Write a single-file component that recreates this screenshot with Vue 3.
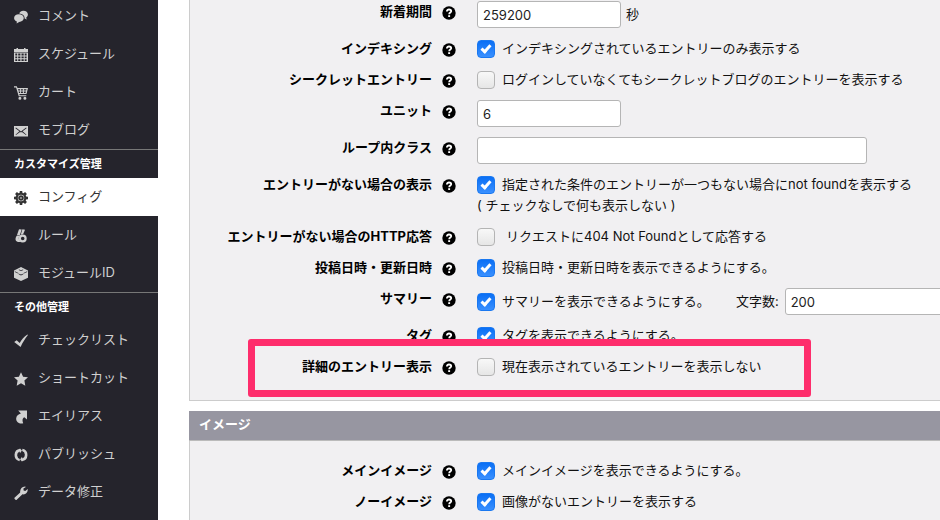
<template>
  <div class="admin">
    <nav class="sidebar">
      <template v-for="group in menu" :key="group.id">
        <h2 v-if="group.title" class="menu-title">{{ group.title }}</h2>
        <ul class="menu">
          <li v-for="item in group.items" :key="item.text">
            <a href="#" class="menu-link" :class="{ active: item.active }">
              <svg class="menu-icon" viewBox="0 0 14 14" aria-hidden="true">
                <path v-for="d in icons[item.icon]" :key="d" :d="d" fill="currentColor" fill-rule="evenodd" />
              </svg>
              <span>{{ item.text }}</span>
            </a>
          </li>
        </ul>
      </template>
    </nav>

    <main class="main">
      <section v-for="section in sections" :key="section.id" class="section" :class="{ titled: section.title }">
        <h2 v-if="section.title" class="section-title">{{ section.title }}</h2>
        <div class="rows">
          <div v-for="row in section.rows" :key="row.id" class="row">
            <label :for="row.id" class="row-label">{{ row.label }}</label>
            <button type="button" class="help" :aria-label="row.label">
              <svg viewBox="0 0 14 14">
                <circle cx="7" cy="7" r="6.7" fill="#000" />
                <path d="M4.9 5.5C4.9 4.1 5.8 3.5 7 3.5S9.2 4.2 9.2 5.3C9.2 6.6 7.2 6.6 7.2 8.2" fill="none" stroke="#fff" stroke-width="1.8" />
                <path d="M6.2 9.2h1.9v1.8H6.2z" fill="#fff" />
              </svg>
            </button>
            <div class="control">
              <div v-if="row.type === 'text'" class="line">
                <input :id="row.id" v-model="row.value" type="text" class="text-input" :class="row.size">
                <span v-if="row.unit">{{ row.unit }}</span>
              </div>
              <div v-else class="line">
                <input :id="row.id" v-model="row.value" type="checkbox" class="check">
                <label :for="row.id" class="check-label" :class="{ spaced: row.spaced }">{{ row.text }}</label>
                <template v-if="row.extra">
                  <label :for="row.id + '-extra'" class="extra-label">{{ row.extra.label }}</label>
                  <input :id="row.id + '-extra'" v-model="row.extra.value" type="text" class="text-input long">
                </template>
              </div>
              <p v-if="row.note" class="note">{{ row.note }}</p>
            </div>
            <div v-if="row.highlight" class="highlight"></div>
          </div>
        </div>
      </section>
    </main>
  </div>
</template>

<script setup>
import { ref } from 'vue';

const menu = [
  {
    id: 'contents',
    items: [
      { text: 'コメント', icon: 'comment' },
      { text: 'スケジュール', icon: 'calendar' },
      { text: 'カート', icon: 'cart' },
      { text: 'モブログ', icon: 'mail' }
    ]
  },
  {
    id: 'customize',
    title: 'カスタマイズ管理',
    items: [
      { text: 'コンフィグ', icon: 'gear', active: true },
      { text: 'ルール', icon: 'rule' },
      { text: 'モジュールID', icon: 'module' }
    ]
  },
  {
    id: 'others',
    title: 'その他管理',
    items: [
      { text: 'チェックリスト', icon: 'check' },
      { text: 'ショートカット', icon: 'star' },
      { text: 'エイリアス', icon: 'alias' },
      { text: 'パブリッシュ', icon: 'publish' },
      { text: 'データ修正', icon: 'wrench' }
    ]
  }
];

const icons = {
  comment: [
    'M5.2 3.4C6 1.500 7.700.7 9.400.8c2.600 0 4.500 1.700 4.500 3.800 0 1.400-.7 2.500-1.800 3.200l.7 1.600-2.200-1C10.800 5.600 8.600 3.500 5.200 3.400z',
    'M4.900 4.200c2.800 0 4.900 1.600 4.900 3.800s-2.100 3.800-4.600 3.900L2.600 13.600l.3-2.100C1.100 10.900.1 9.600.1 8c0-2.200 2-3.800 4.800-3.800z'
  ],
  calendar: [
    'M0 1h2.500V0h1.500v1h6V0h1.500v1H14v3H0z',
    'M0 4.600h14V14H0zM1.300 5.600v1.800h1.900V5.600zM4.200 5.600v1.800h2.200V5.600zM7.500 5.600v1.800h2.200V5.600zM10.700 5.600v1.800h1.900V5.600zM1.300 8.400v1.800h1.900V8.400zM4.200 8.400v1.800h2.200V8.400zM7.500 8.400v1.800h2.200V8.400zM10.700 8.400v1.800h1.900V8.400zM1.300 11.200V13h1.900v-1.800zM4.200 11.200V13h2.200v-1.800zM7.500 11.200V13h2.200v-1.800zM10.700 11.200V13h1.900v-1.800z'
  ],
  cart: [
    'M0 .3h2.800l.7 1.800H14l-1.500 6H5.300l.3 1.100h6.700v1.100H4.700L2.100 1.400H0zM4 3.200l.3 1.300h1.800V3.200zM7 3.200v1.300h1.900V3.200zM9.900 3.200v1.300h2.200l.4-1.300zM4.600 5.400l.4 1.500h1.100V5.400zM7 5.400v1.500h1.900V5.400zM9.900 5.400v1.500h1.700l.3-1.500z',
    'M5.900 10.700a1.500 1.500 0 1 1 0 3 1.500 1.500 0 0 1 0-3zM10.900 10.700a1.500 1.500 0 1 1 0 3 1.500 1.500 0 0 1 0-3z'
  ],
  mail: [
    'M0 2h14v10.500H0zM1.400 4.200l4 3.100-3.900 3.400.5.400 4.100-3.200L7 8.500l.9-.6 4.100 3.200.5-.4-3.900-3.400 4-3.100-.5-.6L7 7.400 1.900 3.600z'
  ],
  gear: [
    'M5.800 0h2.400l.3 1.900 1 .4 1.600-1.200 1.800 1.800-1.200 1.600.4 1 1.900.3v2.400l-1.900.3-.4 1 1.200 1.600-1.800 1.800-1.600-1.200-1 .4-.3 1.900H5.800l-.3-1.900-1-.4-1.600 1.200-1.800-1.800 1.200-1.600-.4-1L0 8.200V5.800l1.900-.3.4-1-1.200-1.600 1.800-1.800 1.600 1.200 1-.4zM7 3.800a3.200 3.200 0 1 0 0 6.400 3.200 3.200 0 0 0 0-6.400z',
    'M7 4.200a2.800 2.800 0 1 1 0 5.600 2.800 2.800 0 0 1 0-5.600zM7 6.200a.8.8 0 1 0 0 1.600.8.8 0 0 0 0-1.600z'
  ],
  rule: [
    'M5 .2l2.700.4-1.800 5.400-2.900.1z',
    'M8.400.3l2.600.4-1.900 4.500-2.400.5z',
    'M3 6.400l3.400.1c-1.100.9-1.700 1.700-1.600 2.900.1 1.400.8 2.500 2 3.300-1.900.9-4.500.1-5.100-1.500-.5-1.400.1-3.700 1.300-4.800z',
    'M8.700 5.500a4 4 0 1 1 0 8 4 4 0 0 1 0-8zM8.700 7.700a1.800 1.800 0 1 0 0 3.600 1.800 1.800 0 0 0 0-3.600z'
  ],
  module: [
    'M7 0L14 3.500v7.200L7 14 0 10.700V3.500zM.8 4.300v.8l3.300 1.500.8-.4zM13.200 4.300v.8L9.900 6.600l-.8-.4zM4.600 3l2.400 1 2.400-1-.5-.5L7 3.200l-1.900-.7zM4.600 7.200L7 8.400l2.400-1.200-.4-.5L7 7.500l-2-.8z'
  ],
  check: ['M.2 7.900l2.500-1.700 3 2.700C7.700 5.600 10 2.900 13.400.6l.5.3C10.700 4.900 8.600 8.600 6.600 12.900z'],
  star: ['M7 .2l2.100 4.500 4.900.6-3.600 3.300.9 5.100L7 11.200l-4.300 2.500.9-5.100L0 5.300l4.900-.6z'],
  alias: ['M4.200.5H13v9.100l-2.700-2.300C8.500 8.300 8 10.300 9.200 13.300 5.400 14.500 1.800 11.700 2.200 8.200 2.400 6 4.300 4.400 6.900 3.600z'],
  publish: [
    'M6 .8A6.300 6.300 0 0 0 5.500 13.200L5.900 10.900A4 4 0 0 1 5.600 3.400L6 5.300 7.900 2.400 5.600 0z',
    'M8 13.200A6.300 6.300 0 0 0 8.500.8L8.100 3.100A4 4 0 0 1 8.400 10.600L8 8.700 6.100 11.600 8.400 14z'
  ],
  wrench: ['M.5 11.800L6.200 6.400C5.800 3.300 7.700.7 11 .5l.9.4-2.500 1.700.2 1.800 1.700.5L13.700 3c.5 3.400-2.200 6-5.200 5.300L2.700 13.700c-1 .7-2.800-.8-2.200-1.900z']
};

const sections = ref([
  {
    id: 'entry',
    rows: [
      { id: 'newtime', label: '新着期間', type: 'text', value: '259200', unit: '秒' },
      { id: 'indexing', label: 'インデキシング', value: true, text: 'インデキシングされているエントリーのみ表示する' },
      { id: 'secret', label: 'シークレットエントリー', value: false, text: 'ログインしていなくてもシークレットブログのエントリーを表示する' },
      { id: 'unit', label: 'ユニット', type: 'text', value: '6' },
      { id: 'loop-class', label: 'ループ内クラス', type: 'text', value: '', size: 'long' },
      {
        id: 'notfound',
        label: 'エントリーがない場合の表示',
        value: true,
        text: '指定された条件のエントリーが一つもない場合にnot foundを表示する',
        note: '( チェックなしで何も表示しない )'
      },
      { id: 'status404', label: 'エントリーがない場合のHTTP応答', value: false, spaced: true, text: 'リクエストに404 Not Foundとして応答する' },
      { id: 'date', label: '投稿日時・更新日時', value: true, text: '投稿日時・更新日時を表示できるようにする。' },
      {
        id: 'summary',
        label: 'サマリー',
        value: true,
        text: 'サマリーを表示できるようにする。',
        extra: { label: '文字数:', value: '200' }
      },
      { id: 'tag', label: 'タグ', value: true, text: 'タグを表示できるようにする。' },
      { id: 'detail', label: '詳細のエントリー表示', value: false, text: '現在表示されているエントリーを表示しない', highlight: true }
    ]
  },
  {
    id: 'image',
    title: 'イメージ',
    rows: [
      { id: 'main-image', label: 'メインイメージ', value: true, text: 'メインイメージを表示できるようにする。' },
      { id: 'no-image', label: 'ノーイメージ', value: true, text: '画像がないエントリーを表示する' }
    ]
  }
]);
</script>

<style>
body {
  background: #fff;
}
</style>

<style scoped>
.admin {
  display: flex;
  height: 100vh;
  overflow: hidden;
  font-family: Inter, "Noto Sans CJK JP", sans-serif;
  font-size: 13px;
  line-height: 21px;
  color: #111;
}

.sidebar {
  flex: 0 0 158px;
  background: #25242c;
}

.menu {
  list-style: none;
  margin: 0;
  padding: 0;
}

.menu:first-child {
  margin-top: -3px;
}

.menu-link {
  box-sizing: border-box;
  display: flex;
  align-items: center;
  gap: 10px;
  height: 38px;
  padding: 0 0 2px 14px;
  color: #d0d0d0;
  text-decoration: none;
}

.menu-link.active {
  background: #fff;
  color: #333;
}

.menu-icon {
  width: 14px;
  height: 14px;
  margin-top: 3px;
}

.menu-title {
  box-sizing: border-box;
  height: 29px;
  margin: 0;
  padding-left: 14px;
  border-top: 1px solid #777;
  font-size: 11px;
  line-height: 28px;
  color: #fff;
}

.main {
  flex: 1;
  min-width: 0;
  display: flex;
  flex-direction: column;
  padding-left: 31px;
}

.section {
  flex: none;
  border: solid #ccc;
  border-width: 0 0 1px 1px;
  background: #f1f0f2;
}

.section.titled {
  flex: 1;
  margin-top: 10px;
}

.section-title {
  margin: 0 0 0 -1px;
  padding: 3px 10px 5px;
  border-bottom: 1px solid #bbb;
  background: #9796a1;
  font-size: 13px;
  color: #fff;
}

.rows {
  display: flex;
  flex-direction: column;
  gap: 10px;
  padding: 1px 0 23px;
}

.titled .rows {
  padding-top: 19px;
}

.row {
  position: relative;
  display: flex;
  align-items: flex-start;
}

.row-label {
  flex: 0 0 242px;
  text-align: right;
  font-weight: bold;
  color: #000;
}

.help {
  flex: none;
  width: 14px;
  height: 14px;
  margin: 5px 21px 0 10px;
  padding: 0;
  border: none;
  background: none;
  cursor: pointer;
}

.help svg {
  display: block;
}

.control {
  flex: 1;
  min-width: 0;
  white-space: nowrap;
}

.line {
  display: flex;
  align-items: center;
}

.text-input {
  box-sizing: border-box;
  flex: none;
  width: 144px;
  height: 27px;
  margin: 0 5px 0 0;
  padding: 1px 5px 0;
  border: 1px solid #b5b5b5;
  border-radius: 3px;
  background: #fff;
  font-family: inherit;
  font-size: 13px;
  color: #222;
}

.text-input.long {
  width: 390px;
}

.check {
  appearance: none;
  box-sizing: border-box;
  flex: none;
  display: flex;
  justify-content: center;
  width: 18px;
  height: 18px;
  margin: 0 7px 0 0;
  border: 1px solid #b4b4b4;
  border-radius: 4px;
  background: linear-gradient(#f8f8f8, #e6e6e6);
}

.check:checked {
  border-color: #1a78f0;
  background: linear-gradient(#0a6ff5, #3a90ff);
}

.check:checked::before {
  content: "";
  width: 3px;
  height: 7px;
  margin-top: 2px;
  border: solid #fff;
  border-width: 0 3px 3px 0;
  transform: rotate(42deg);
}

.check-label.spaced {
  padding-left: 4px;
}

.extra-label {
  margin: 0 6px 0 26px;
}

.note {
  margin: 0;
}

/* frame drawn over the neighbouring rows */
.highlight {
  position: absolute;
  top: -17px;
  left: 58px;
  box-sizing: border-box;
  width: 563px;
  height: 58px;
  border: 7px solid #fe2d6c;
  border-radius: 3px;
  pointer-events: none;
}
</style>
